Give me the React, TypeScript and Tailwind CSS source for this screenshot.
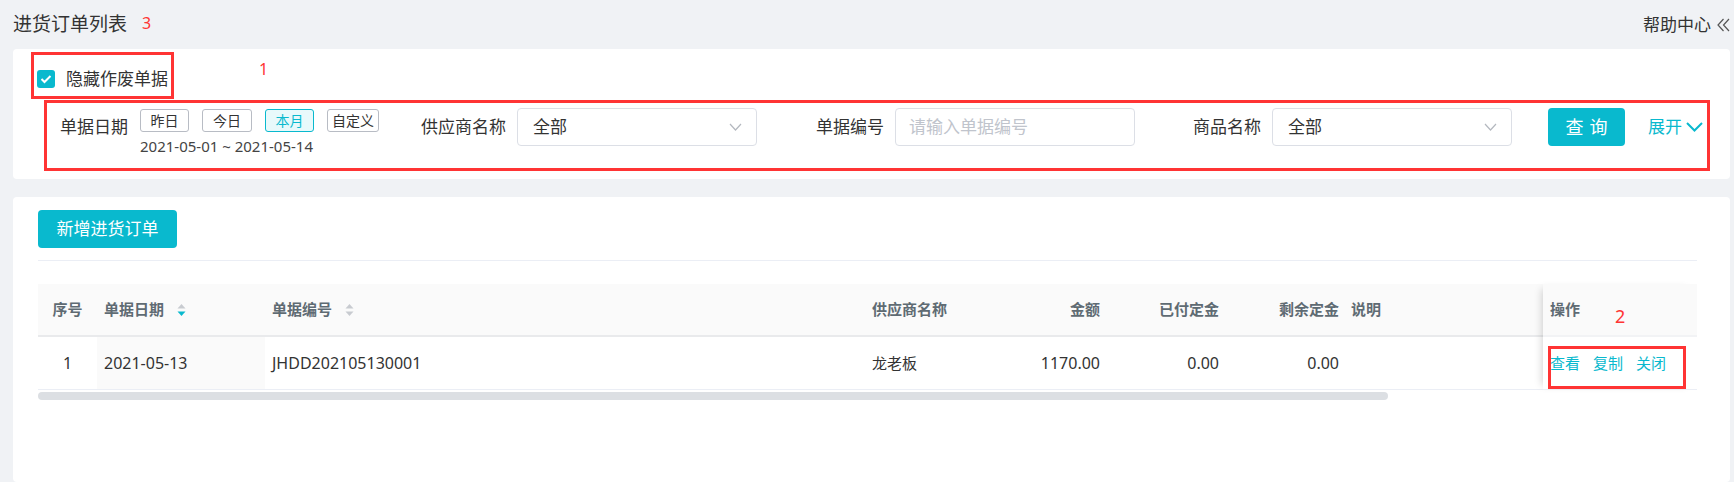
import React from "react";

const dateTabs = [
  { label: "昨日", w: "w-[49px]" },
  { label: "今日", w: "w-[50px]" },
  { label: "本月", w: "w-[49px]", active: true },
  { label: "自定义", w: "w-[52px]" },
];

const SelectArrow = () => (
  <svg width="13" height="8" viewBox="0 0 13 8" fill="none">
    <path d="M1 1l5.5 6L12 1" stroke="#b4b8bf" strokeWidth="1.2" />
  </svg>
);

const SortIcon = ({ active }: { active?: boolean }) => (
  <svg width="9" height="14" viewBox="0 0 9 14" className="ml-[13px]">
    <path d="M4.5 1L8.5 5.5H0.5Z" fill="#c8cbd0" />
    <path d="M4.5 13L8.5 8.5H0.5Z" fill={active ? "#09b9ce" : "#c8cbd0"} />
  </svg>
);

const App: React.FC = () => {
  return (
    <div className="min-h-screen bg-[#f0f2f5] pl-[13px] pr-[4px] font-['Noto_Sans','Noto_Sans_CJK_SC',sans-serif] text-[#333]">
      {/* page title */}
      <div className="relative flex h-[49px] items-center justify-between">
        <div className="text-[19px] leading-none text-[#333]">进货订单列表</div>
        <span className="absolute left-[129px] top-[13px] text-[16px] leading-[20px] text-[#ff3434]">3</span>
        <div className="flex items-center gap-[6px] text-[17px] text-[#333]">
          帮助中心
          <svg width="13" height="14" viewBox="0 0 13 14" fill="none">
            <path d="M6.5 1L1 7l5.5 6M12 1L6.5 7l5.5 6" stroke="#555" strokeWidth="1.2" />
          </svg>
        </div>
      </div>

      {/* filter card */}
      <div className="relative h-[130px] rounded-[4px] bg-white pl-[24px] pt-[15px]">
        <div className="flex h-[30px] items-center">
          <span className="flex h-[18px] w-[18px] items-center justify-center rounded-[3px] bg-[#09b9ce]">
            <svg width="12" height="10" viewBox="0 0 12 10" fill="none">
              <path d="M1.5 5l3 3L10.5 2" stroke="#fff" strokeWidth="2" />
            </svg>
          </span>
          <span className="ml-[11px] text-[17px]">隐藏作废单据</span>
        </div>

        <div className="mt-[14px] flex items-start pl-[23px]">
          <div className="h-[38px] text-[17px] leading-[38px]">单据日期</div>
          <div className="ml-[12px] mt-[1px]">
            <div className="flex gap-[13px]">
              {dateTabs.map((t) => (
                <span
                  key={t.label}
                  className={
                    t.active
                      ? `${t.w} flex h-[23px] items-center justify-center rounded-[3px] border border-[#09b9ce] bg-[#e8f9fb] text-[14px] text-[#09b9ce]`
                      : `${t.w} flex h-[23px] items-center justify-center rounded-[3px] border border-[#b8bcc4] text-[14px] text-[#333]`
                  }
                >
                  {t.label}
                </span>
              ))}
            </div>
            <div className="mt-[4px] text-[15px] leading-[20px] text-[#444]">2021-05-01 ~ 2021-05-14</div>
          </div>

          <div className="ml-[42px] h-[38px] text-[17px] leading-[38px]">供应商名称</div>
          <div className="ml-[11px] flex h-[38px] w-[240px] items-center justify-between rounded-[4px] border border-[#dcdfe6] pl-[15px] pr-[14px] text-[17px]">
            全部
            <SelectArrow />
          </div>

          <div className="ml-[59px] h-[38px] text-[17px] leading-[38px]">单据编号</div>
          <div className="ml-[11px] flex h-[38px] w-[240px] items-center rounded-[4px] border border-[#dcdfe6] pl-[13px] text-[17px] text-[#c0c4cc]">
            请输入单据编号
          </div>

          <div className="ml-[58px] h-[38px] text-[17px] leading-[38px]">商品名称</div>
          <div className="ml-[11px] flex h-[38px] w-[240px] items-center justify-between rounded-[4px] border border-[#dcdfe6] pl-[15px] pr-[14px] text-[17px]">
            全部
            <SelectArrow />
          </div>

          <button className="ml-[36px] h-[38px] w-[77px] rounded-[4px] bg-[#09b9ce] text-[18px] tracking-[6px] text-white indent-[6px]">
            查询
          </button>

          <div className="ml-[23px] flex h-[38px] items-center gap-[4px] text-[17px] text-[#09b9ce]">
            展开
            <svg width="17" height="10" viewBox="0 0 17 10" fill="none">
              <path d="M1 1l7.5 7.5L16 1" stroke="#09b9ce" strokeWidth="2" />
            </svg>
          </div>
        </div>

        {/* annotations */}
        <div className="absolute left-[18px] top-[3px] h-[47px] w-[143px] border-[3px] border-[#ff3434]" />
        <div className="absolute left-[31px] top-[51px] h-[71px] w-[1666px] border-[3px] border-[#ff3434]" />
        <span className="absolute left-[246px] top-[10px] text-[16px] leading-[20px] text-[#ff3434]">1</span>
      </div>

      {/* list card */}
      <div className="mt-[18px] min-h-[285px] rounded-[4px] bg-white pl-[25px] pr-[33px] pt-[13px]">
        <button className="h-[38px] w-[139px] rounded-[4px] bg-[#09b9ce] text-[17px] text-white">新增进货订单</button>
        <div className="mt-[12px] h-px bg-[#ebeef5]" />

        <div className="relative mt-[23px] flex items-start">
          <div className="w-[1505px]">
            <div className="flex h-[53px] items-center border-b-2 border-[#e9eaec] bg-[#fafafa] text-[15px] font-semibold text-[#5f6b73]">
              <div className="w-[59px] text-center">序号</div>
              <div className="flex w-[168px] items-center pl-[7px]">
                单据日期
                <SortIcon active />
              </div>
              <div className="flex w-[600px] items-center pl-[7px]">
                单据编号
                <SortIcon />
              </div>
              <div className="w-[135px] pl-[7px]">供应商名称</div>
              <div className="w-[107px] pr-[7px] text-right">金额</div>
              <div className="w-[119px] pr-[7px] text-right">已付定金</div>
              <div className="w-[120px] pr-[7px] text-right">剩余定金</div>
              <div className="w-[42px] pl-[5px]">说明</div>
            </div>
            <div className="flex h-[53px] items-stretch border-b border-[#ebeef5] text-[16px] text-[#333]">
              <div className="flex w-[59px] items-center justify-center">1</div>
              <div className="flex w-[168px] items-center bg-[#fafafa] pl-[7px]">2021-05-13</div>
              <div className="flex w-[600px] items-center pl-[7px]">JHDD202105130001</div>
              <div className="flex w-[135px] items-center pl-[7px] text-[15px]">龙老板</div>
              <div className="flex w-[107px] items-center justify-end pr-[7px]">1170.00</div>
              <div className="flex w-[119px] items-center justify-end pr-[7px]">0.00</div>
              <div className="flex w-[120px] items-center justify-end pr-[7px]">0.00</div>
              <div className="w-[42px]" />
            </div>
            <div className="mt-[2px] h-[8px] w-[1350px] rounded-full bg-[#dcdfe3]" />
          </div>

          {/* fixed action column */}
          <div className="w-[154px] bg-white shadow-[-6px_0_8px_-5px_rgba(0,0,0,0.18)]">
            <div className="flex h-[53px] items-center border-b-2 border-[#f2f3f5] bg-[#fafafa] pl-[7px] text-[15px] font-semibold text-[#5f6b73]">
              操作
            </div>
            <div className="flex h-[53px] items-center gap-[13px] border-b border-[#ebeef5] pl-[7px] text-[15px] text-[#09b9ce]">
              <span>查看</span>
              <span>复制</span>
              <span>关闭</span>
            </div>
          </div>

          <span className="absolute left-[1577px] top-[20px] text-[18px] leading-[24px] text-[#ff3434]">2</span>
          <div className="absolute left-[1510px] top-[62px] h-[43px] w-[138px] border-[3px] border-[#ff3434]" />
        </div>
      </div>
    </div>
  );
};

export default App;
